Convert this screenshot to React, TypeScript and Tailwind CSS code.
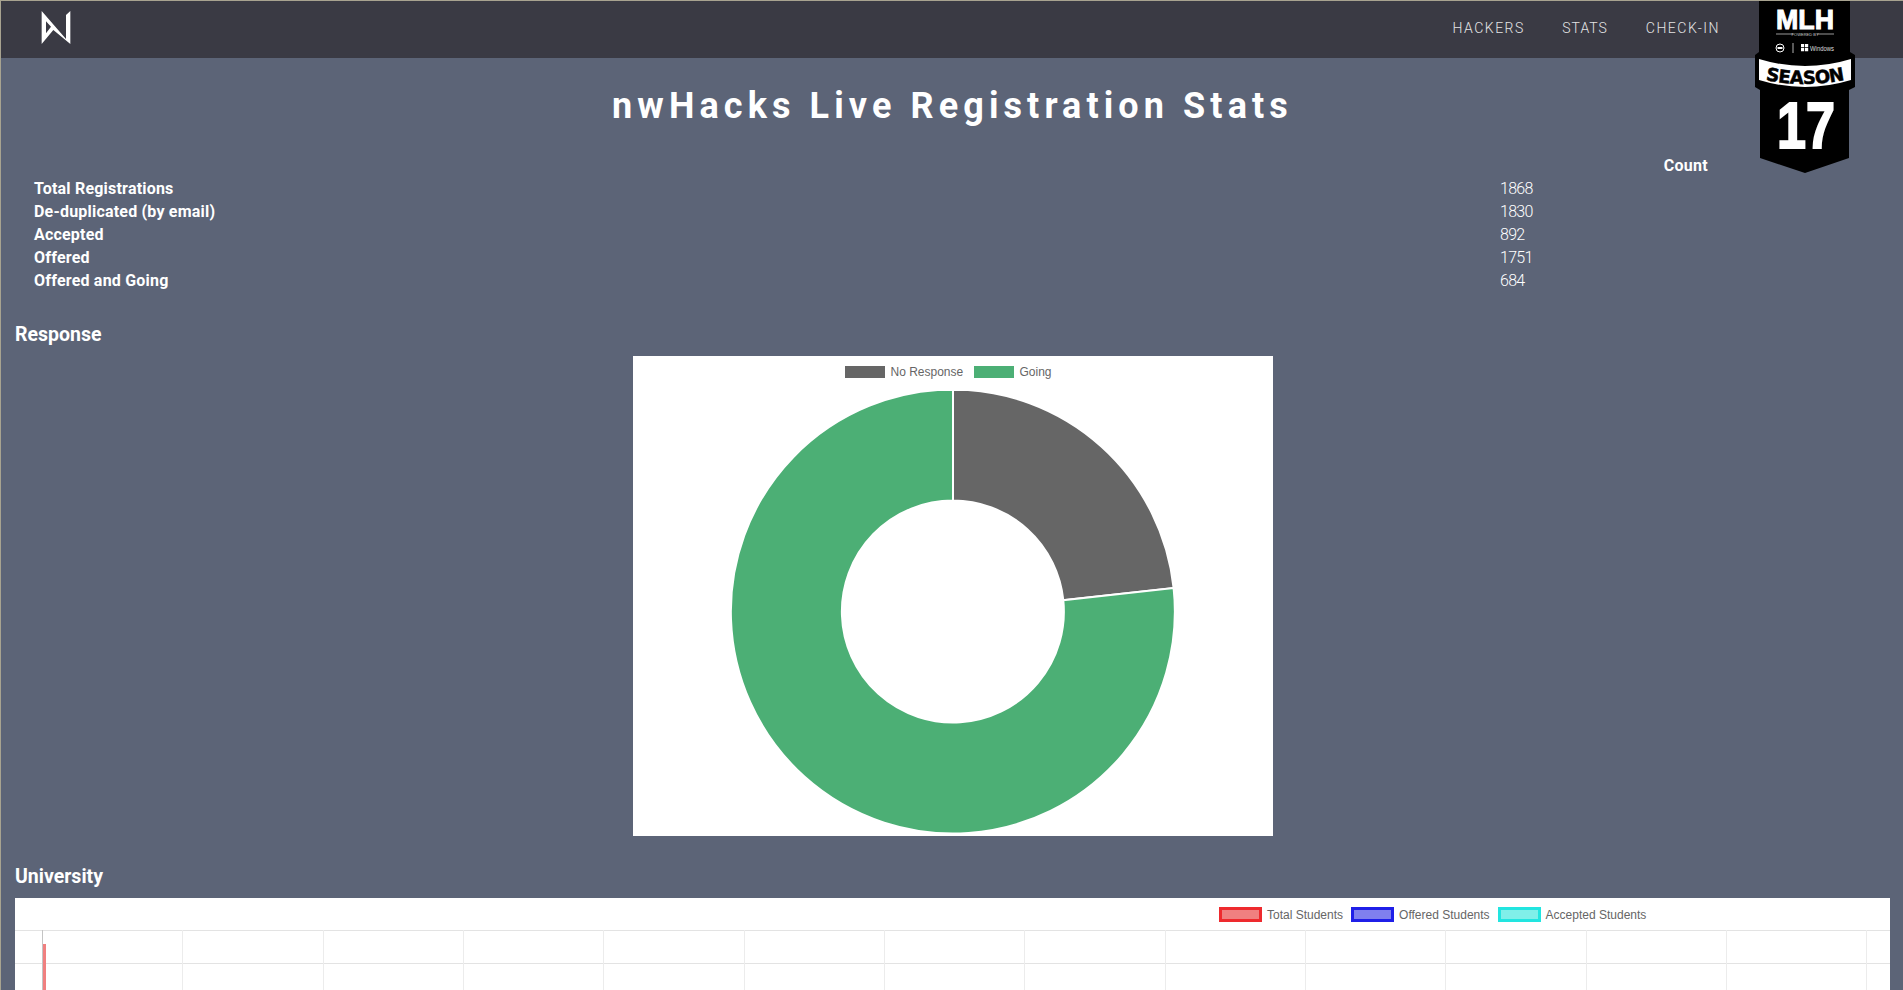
import React from 'react';

const stats = [
  { label: 'Total Registrations', value: 1868 },
  { label: 'De-duplicated (by email)', value: 1830 },
  { label: 'Accepted', value: 892 },
  { label: 'Offered', value: 1751 },
  { label: 'Offered and Going', value: 684 },
];

const universityLegend = [
  { label: 'Total Students', box: 'border-[#ee2a2e] bg-[#f08080]' },
  { label: 'Offered Students', box: 'border-[#1f1fe8] bg-[#8080ee]' },
  { label: 'Accepted Students', box: 'border-[#22e5e0] bg-[#80efe9]' },
];

// x positions of the vertical grid lines, relative to the chart's left edge
const gridX = [167, 308, 448, 588, 729, 869, 1009, 1150, 1290, 1430, 1571, 1711, 1851];

function Logo() {
  return (
    <svg width="80" height="60" viewBox="0 0 240 180" className="block">
      <path
        fill="#fff"
        fillRule="evenodd"
        d="M62 33 L135 117 V45 L148 33 V132 L97 90 L62 132 Z M75 64 V100 L90 80 Z"
      />
    </svg>
  );
}

function SeasonBadge() {
  return (
    <svg width="100" height="172" viewBox="0 0 100 172" className="absolute top-0 right-[48px]">
      <path fill="#000" d="M4 0 H95 V51 L100 54 V86 L94 89 V157 L50 172 L5 157 V89 L0 86 V54 L4 51 Z" />
      <path fill="#fff" d="M4 58 Q50 72 96 58 V79 Q50 93 4 79 Z" />
      <text x="50" y="28" textAnchor="middle" textLength="58" lengthAdjust="spacingAndGlyphs" fontFamily="Liberation Sans" fontWeight="700" fontSize="28" stroke="#fff" strokeWidth="1" fill="#fff">MLH</text>
      <path stroke="#fff" strokeWidth="0.6" d="M21 33 H38 M62 33 H79" />
      <text x="50" y="35" textAnchor="middle" fontFamily="Liberation Sans" fontSize="4" fill="#ccc">POWERED BY</text>
      <circle cx="25" cy="47" r="4" fill="none" stroke="#fff" strokeWidth="1" />
      <path stroke="#fff" strokeWidth="2" d="M22.5 47 H27.5" />
      <path stroke="#fff" strokeWidth="0.7" d="M38 42 V52" />
      <path fill="#fff" d="M46 43 H49.2 V46.2 H46 Z M50 43 H53.2 V46.2 H50 Z M46 47 H49.2 V50.2 H46 Z M50 47 H53.2 V50.2 H50 Z" />
      <text x="55" y="50" textLength="24" lengthAdjust="spacingAndGlyphs" fontFamily="Liberation Sans" fontSize="7" fill="#ddd">Windows</text>
      <path id="season-arc" fill="none" d="M6 78 Q50 88 94 78" />
      <text textAnchor="middle" fontFamily="DejaVu Sans" fontWeight="700" fontSize="18" stroke="#000" strokeWidth="0.5" fill="#000" letterSpacing="-0.5">
        <textPath href="#season-arc" startOffset="50%">SEASON</textPath>
      </text>
      <text x="51" y="147" textAnchor="middle" textLength="58" lengthAdjust="spacingAndGlyphs" fontFamily="Liberation Sans" fontWeight="700" fontSize="64" stroke="#fff" strokeWidth="2" fill="#fff">17</text>
    </svg>
  );
}

function ResponseChart() {
  return (
    <div className="mx-auto mt-[8px] h-[480px] w-[640px] bg-white">
      <div className="flex h-[35px] items-start pt-[10px] pl-[212px] font-['Liberation_Sans',sans-serif] text-[12px] leading-[12px] text-[#666]">
        <span className="h-[12px] w-[40px] bg-[#666666]" />
        <span className="ml-[6px] w-[83px]">No Response</span>
        <span className="h-[12px] w-[40px] bg-[#4caf75]" />
        <span className="ml-[6px]">Going</span>
      </div>
      <svg width="640" height="445" viewBox="0 36 640 445" className="block">
        <path
          fill="#666666"
          stroke="#fff"
          strokeWidth="2"
          d="M320 34.5 A222 222 0 0 1 540.6 233 L430.3 245.2 A111 111 0 0 0 320 145.5 Z"
        />
        <path
          fill="#4caf75"
          stroke="#fff"
          strokeWidth="2"
          d="M540.6 233 A222 222 0 1 1 320 34.5 L320 145.5 A111 111 0 1 0 430.3 245.2 Z"
        />
      </svg>
    </div>
  );
}

function UniversityChart() {
  return (
    <div className="mt-[8px] bg-white">
      <div className="flex h-[32px] items-start pt-[8px] pl-[1204px] font-['Liberation_Sans',sans-serif] text-[12px] leading-[15px] text-[#666]">
        {universityLegend.map((item) => (
          <div key={item.label} className="mr-[8px] flex items-center">
            <span className={`h-[15px] w-[43px] border-[3px] ${item.box}`} />
            <span className="mt-[2px] ml-[5px]">{item.label}</span>
          </div>
        ))}
      </div>
      <svg width="1875" height="70" className="block">
        <path stroke="#e3e3e3" strokeWidth="1" d="M0 0.5 H1875 M0 33.5 H1875" />
        {gridX.map((x) => (
          <path key={x} stroke="#ececec" strokeWidth="1" d={`M${x + 0.5} 0 V70`} />
        ))}
        <path stroke="#c4c4c4" strokeWidth="1" d="M27.5 0 V70" />
        <rect x="28" y="14" width="3" height="56" fill="#f08080" />
      </svg>
    </div>
  );
}

export default function App() {
  return (
    <div className="relative h-[990px] overflow-hidden border-t border-l border-[#a8a390] bg-[#5c6477] font-['Roboto',sans-serif] text-white">
      <header className="flex h-[57px] items-center justify-between bg-[#3a3a44] pr-[183px] pl-[20px]">
        <Logo />
        <nav className="mb-[2px] flex text-[14px] font-light tracking-[1.5px] text-[#e4e4e4]">
          <a className="mr-[37.5px]">HACKERS</a>
          <a className="mr-[38px] tracking-[1px]">STATS</a>
          <a>CHECK-IN</a>
        </nav>
      </header>

      <SeasonBadge />

      <main className="pr-[13px] pl-[14px]">
        <h1 className="mt-[26px] text-center text-[36px] leading-[44px] font-bold tracking-[5.1px]">
          nwHacks Live Registration Stats
        </h1>

        <div className="mt-[26px] pl-[19px] text-[16px] leading-[23px]">
          <div className="pr-[182px] text-right font-bold tracking-[0.3px]">Count</div>
          {stats.map((row) => (
            <div key={row.label} className="grid grid-cols-[1466px_1fr]">
              <span className="font-bold tracking-[0.2px]">{row.label}</span>
              <span className="font-light tracking-[-0.7px]">{row.value}</span>
            </div>
          ))}
        </div>

        <h2 className="mt-[30px] text-[19.5px] leading-[26px] font-bold">Response</h2>
        <ResponseChart />

        <h2 className="mt-[28px] text-[19.5px] leading-[26px] font-bold">University</h2>
        <UniversityChart />
      </main>
    </div>
  );
}
